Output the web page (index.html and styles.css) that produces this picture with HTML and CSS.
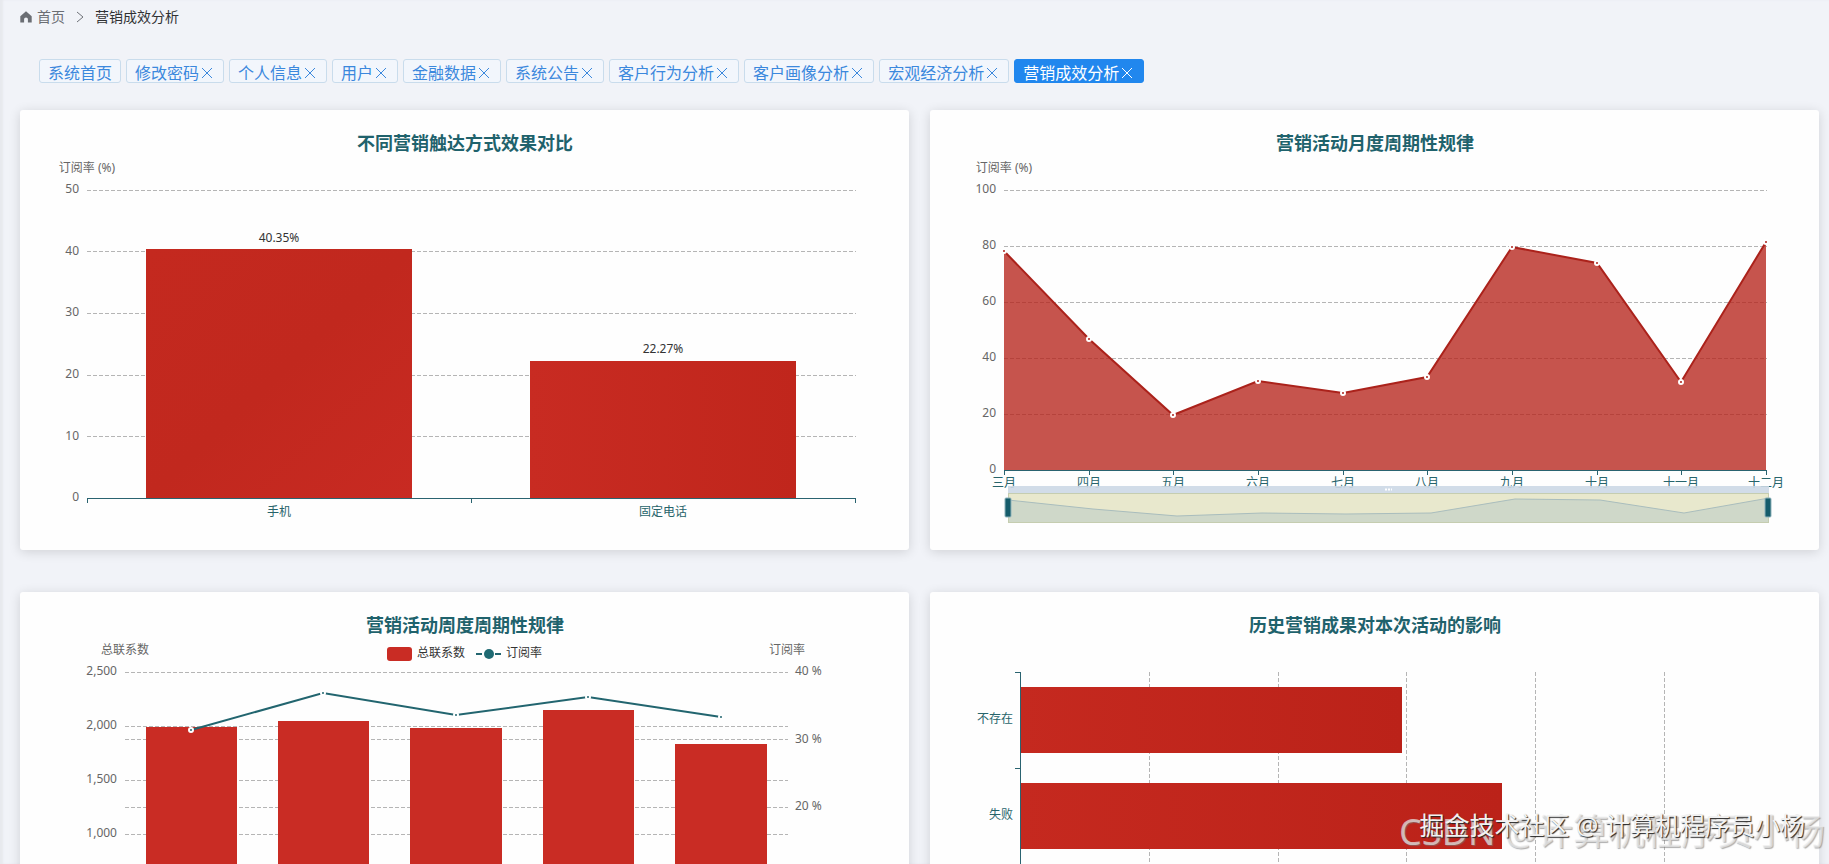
FILE: index.html
```html
<!DOCTYPE html>
<html lang="zh-CN">
<head>
    <meta charset="UTF-8">
    <meta name="viewport" content="width=device-width, initial-scale=1.0">
    <title>营销成效分析</title>
    <link rel="stylesheet" href="styles.css">
</head>
<body>
    <div class="container">
        <nav class="breadcrumb">
            <svg class="home-icon" viewBox="0 0 12 12"><path d="M6 0.3 L11.7 5.2 V11.6 H7.9 V8 Q7.9 6.4 6 6.4 Q4.1 6.4 4.1 8 V11.6 H0.3 V5.2 Z"/></svg>
            <a href="#">首页</a>
            <svg class="arrow-icon" viewBox="0 0 8 12"><path d="M1 1 L7 6 L1 11"/></svg>
            <span class="current">营销成效分析</span>
        </nav>
        <div class="tabs">
            <div class="tab"><a href="#">系统首页</a></div>
            <div class="tab"><a href="#">修改密码</a><button aria-label="关闭"><svg viewBox="0 0 12 12"><path d="M1 1 L11 11 M11 1 L1 11"/></svg></button></div>
            <div class="tab"><a href="#">个人信息</a><button aria-label="关闭"><svg viewBox="0 0 12 12"><path d="M1 1 L11 11 M11 1 L1 11"/></svg></button></div>
            <div class="tab"><a href="#">用户</a><button aria-label="关闭"><svg viewBox="0 0 12 12"><path d="M1 1 L11 11 M11 1 L1 11"/></svg></button></div>
            <div class="tab"><a href="#">金融数据</a><button aria-label="关闭"><svg viewBox="0 0 12 12"><path d="M1 1 L11 11 M11 1 L1 11"/></svg></button></div>
            <div class="tab"><a href="#">系统公告</a><button aria-label="关闭"><svg viewBox="0 0 12 12"><path d="M1 1 L11 11 M11 1 L1 11"/></svg></button></div>
            <div class="tab"><a href="#">客户行为分析</a><button aria-label="关闭"><svg viewBox="0 0 12 12"><path d="M1 1 L11 11 M11 1 L1 11"/></svg></button></div>
            <div class="tab"><a href="#">客户画像分析</a><button aria-label="关闭"><svg viewBox="0 0 12 12"><path d="M1 1 L11 11 M11 1 L1 11"/></svg></button></div>
            <div class="tab"><a href="#">宏观经济分析</a><button aria-label="关闭"><svg viewBox="0 0 12 12"><path d="M1 1 L11 11 M11 1 L1 11"/></svg></button></div>
            <div class="tab active"><a href="#">营销成效分析</a><button aria-label="关闭"><svg viewBox="0 0 12 12"><path d="M1 1 L11 11 M11 1 L1 11"/></svg></button></div>
        </div>
        <div class="charts">
            <!-- 触达方式 -->
            <div class="card">
                <svg class="chart" viewBox="0 0 889 440">
                    <defs>
                        <linearGradient id="red1" x1="0" y1="0" x2="1" y2="1">
                            <stop offset="0" stop-color="#c4291f"/>
                            <stop offset="0.5" stop-color="#c1281e"/>
                            <stop offset="1" stop-color="#c82a22"/>
                        </linearGradient>
                        <linearGradient id="red2" x1="0" y1="0" x2="1" y2="0">
                            <stop offset="0" stop-color="#c82b22"/>
                            <stop offset="1" stop-color="#c0261c"/>
                        </linearGradient>
                    </defs>
                    <text class="title" x="445" y="40">不同营销触达方式效果对比</text>
                    <text class="name" x="67" y="62">订阅率 (%)</text>
                    <path class="grid" d="M67 80.5 H836 M67 141.5 H836 M67 203.5 H836 M67 265.5 H836 M67 326.5 H836"/>
                    <g class="y-label">
                        <text x="59" y="83">50</text>
                        <text x="59" y="145">40</text>
                        <text x="59" y="206">30</text>
                        <text x="59" y="268">20</text>
                        <text x="59" y="330">10</text>
                        <text x="59" y="391">0</text>
                    </g>
                    <rect x="126" y="139" width="266" height="249" fill="url(#red1)"/>
                    <rect x="510" y="251" width="266" height="137" fill="url(#red2)"/>
                    <path class="axis" d="M67 388.5 H836 M67.5 388 V393 M451.5 388 V393 M835.5 388 V393"/>
                    <text class="value" x="259" y="132">40.35%</text>
                    <text class="value" x="643" y="243">22.27%</text>
                    <text class="x-label" x="259" y="406">手机</text>
                    <text class="x-label" x="643" y="406">固定电话</text>
                </svg>
            </div>
            <!-- 月度规律 -->
            <div class="card">
                <svg class="chart" viewBox="0 0 889 440">
                    <text class="title" x="445" y="40">营销活动月度周期性规律</text>
                    <text class="name" x="74" y="62">订阅率 (%)</text>
                    <path class="grid" d="M74 80.5 H837 M74 136.5 H837 M74 192.5 H837 M74 248.5 H837 M74 304.5 H837"/>
                    <g class="y-label">
                        <text x="66" y="83">100</text>
                        <text x="66" y="139">80</text>
                        <text x="66" y="195">60</text>
                        <text x="66" y="251">40</text>
                        <text x="66" y="307">20</text>
                        <text x="66" y="363">0</text>
                    </g>
                    <path class="area" d="M74 141 L159 229 L243 305 L328 271 L413 283 L497 267 L582 137 L667 153 L751 272 L836 132 V360 H74 Z"/>
                    <path class="line-red" d="M74 141 L159 229 L243 305 L328 271 L413 283 L497 267 L582 137 L667 153 L751 272 L836 132"/>
                    <g class="dot-red">
                        <circle cx="74" cy="141" r="2"/>
                        <circle cx="159" cy="229" r="2"/>
                        <circle cx="243" cy="305" r="2"/>
                        <circle cx="328" cy="271" r="2"/>
                        <circle cx="413" cy="283" r="2"/>
                        <circle cx="497" cy="267" r="2"/>
                        <circle cx="582" cy="137" r="2"/>
                        <circle cx="667" cy="153" r="2"/>
                        <circle cx="751" cy="272" r="2"/>
                        <circle cx="836" cy="132" r="2"/>
                    </g>
                    <path class="axis" d="M74 360.5 H837 M74.5 360 V365 M159.5 360 V365 M243.5 360 V365 M328.5 360 V365 M413.5 360 V365 M497.5 360 V365 M582.5 360 V365 M667.5 360 V365 M751.5 360 V365 M836.5 360 V365"/>
                    <g class="x-label">
                        <text x="74" y="377">三月</text>
                        <text x="159" y="377">四月</text>
                        <text x="243" y="377">五月</text>
                        <text x="328" y="377">六月</text>
                        <text x="413" y="377">七月</text>
                        <text x="497" y="377">八月</text>
                        <text x="582" y="377">九月</text>
                        <text x="667" y="377">十月</text>
                        <text x="751" y="377">十一月</text>
                        <text x="836" y="377">十二月</text>
                    </g>
                    <!-- 区域缩放条 -->
                    <rect class="zoom-move" x="78" y="376" width="761" height="7"/>
                    <path class="zoom-grip" d="M455 379.5 H462"/>
                    <rect class="zoom-bg" x="78" y="383" width="761" height="30"/>
                    <path class="zoom-area" d="M78 390 L163 399 L247 406 L332 403 L416 404 L501 403 L585 389 L670 390 L754 403 L839 388 V413 H78 Z"/>
                    <path class="zoom-line" d="M78 390 L163 399 L247 406 L332 403 L416 404 L501 403 L585 389 L670 390 L754 403 L839 388"/>
                    <path class="zoom-border" d="M78.5 383 V413 M838.5 383 V413 M78 383.5 H839 M78 412.5 H839"/>
                    <rect class="zoom-handle" x="75" y="388" width="6" height="19" rx="1"/>
                    <rect class="zoom-handle" x="835" y="388" width="6" height="19" rx="1"/>
                </svg>
            </div>
            <!-- 周度规律 -->
            <div class="card">
                <svg class="chart" viewBox="0 0 889 440">
                    <text class="title" x="445" y="40">营销活动周度周期性规律</text>
                    <rect class="bar" x="367" y="55" width="25" height="14" rx="3"/>
                    <text class="legend" x="397" y="65">总联系数</text>
                    <path class="line-teal" d="M456 62 H462 M475 62 H481"/>
                    <circle class="legend-dot" cx="469" cy="62" r="5"/>
                    <text class="legend" x="486" y="65">订阅率</text>
                    <text class="name" x="105" y="62">总联系数</text>
                    <text class="name" x="767" y="62">订阅率</text>
                    <path class="grid" d="M105 80.5 H768 M105 134.5 H768 M105 147.5 H768 M105 188.5 H768 M105 215.5 H768 M105 242.5 H768"/>
                    <g class="y-label">
                        <text x="97" y="83">2,500</text>
                        <text x="97" y="137">2,000</text>
                        <text x="97" y="191">1,500</text>
                        <text x="97" y="245">1,000</text>
                    </g>
                    <g class="y-label-right">
                        <text x="775" y="83">40 %</text>
                        <text x="775" y="151">30 %</text>
                        <text x="775" y="218">20 %</text>
                    </g>
                    <g class="bar">
                        <rect x="126" y="135" width="91" height="215"/>
                        <rect x="258" y="129" width="91" height="221"/>
                        <rect x="390" y="136" width="92" height="214"/>
                        <rect x="523" y="118" width="91" height="232"/>
                        <rect x="655" y="152" width="92" height="198"/>
                    </g>
                    <path class="axis" d="M105 350.5 H768"/>
                    <path class="line-teal" d="M171 138 L303 101 L436 123 L568 105 L701 125"/>
                    <g class="dot-teal">
                        <circle cx="171" cy="138" r="2"/>
                        <circle cx="303" cy="101" r="2"/>
                        <circle cx="436" cy="123" r="2"/>
                        <circle cx="568" cy="105" r="2"/>
                        <circle cx="701" cy="125" r="2"/>
                    </g>
                </svg>
            </div>
            <!-- 历史成果 -->
            <div class="card">
                <svg class="chart" viewBox="0 0 889 440">
                    <defs>
                        <linearGradient id="red3" x1="0" y1="0" x2="1" y2="0">
                            <stop offset="0" stop-color="#c5291f"/>
                            <stop offset="1" stop-color="#bb2219"/>
                        </linearGradient>
                    </defs>
                    <text class="title" x="445" y="40">历史营销成果对本次活动的影响</text>
                    <path class="grid" d="M219.5 80 V368 M348.5 80 V368 M476.5 80 V368 M605.5 80 V368 M734.5 80 V368"/>
                    <rect x="90" y="95" width="382" height="66" fill="url(#red3)"/>
                    <rect x="90" y="191" width="482" height="66" fill="url(#red3)"/>
                    <path class="axis" d="M90.5 80 V368 M85 80.5 H91 M85 176.5 H91 M85 272.5 H91"/>
                    <g class="cat-label">
                        <text x="83" y="131">不存在</text>
                        <text x="83" y="227">失败</text>
                    </g>
                </svg>
            </div>
        </div>
    </div>
    <div class="watermark csdn">CSDN @计算机程序员小杨</div>
    <div class="watermark juejin">掘金技术社区 @ 计算机程序员小杨</div>
</body>
</html>
```

FILE: styles.css
```css
html, body {
    height: 100%;
    margin: 0;
    padding: 0;
    font-family: "Noto Sans", "Noto Sans CJK SC", sans-serif;
    background-color: #f1f3f8;
    color: #303133;
}
body {
    position: relative;
    overflow: hidden;
}
a {
    color: inherit;
    text-decoration: none;
}
.container {
    box-sizing: border-box;
    height: 100%;
    padding: 7px 10px 0 20px;
    overflow: hidden;
    box-shadow: inset 3px 0 2px #e7e9ee;
}
.breadcrumb {
    display: flex;
    align-items: center;
    height: 20px;
    font-size: 14px;
    line-height: 20px;
    color: #6b6e74;
}
.home-icon {
    width: 12px;
    height: 12px;
    margin-right: 5px;
    fill: #6b6e74;
}
.arrow-icon {
    width: 8px;
    height: 12px;
    margin: 0 11px;
    fill: none;
    stroke: #6f7278;
}
.breadcrumb .current {
    color: #303133;
}
.tabs {
    display: flex;
    gap: 5px;
    margin: 32px 0 27px 19px;
}
.tab {
    display: flex;
    align-items: center;
    box-sizing: border-box;
    height: 24px;
    padding: 4px 8px 0;
    border: 1px solid #c9dcec;
    border-radius: 3px;
    background-color: #f2f6fc;
    font-size: 16px;
    line-height: 20px;
    color: #3b88dd;
}
.tab button {
    display: flex;
    align-items: center;
    justify-content: flex-end;
    width: 16px;
    height: 16px;
    padding: 0 2px 0 0;
    border: none;
    background: none;
    color: inherit;
    cursor: pointer;
}
.tab svg {
    width: 12px;
    height: 12px;
    flex-shrink: 0;
    fill: none;
    stroke: currentColor;
}
.tab.active {
    border-color: #2187ee;
    background-color: #2187ee;
    color: #fff;
}
.charts {
    display: grid;
    grid-template-columns: 1fr 1fr;
    gap: 42px 21px;
}
.card {
    border-radius: 3px;
    background-color: #fefefe;
    box-shadow: 0 2px 12px rgba(0, 0, 0, 0.14);
}
.chart {
    display: block;
    width: 100%;
    font-size: 12px;
}
.title {
    font-size: 18px;
    font-weight: bold;
    text-anchor: middle;
    fill: #1f626c;
}
.name {
    text-anchor: middle;
    fill: #666;
}
.grid {
    fill: none;
    stroke: #b5b5b5;
    stroke-dasharray: 4 2;
}
.axis {
    fill: none;
    stroke: #2a6370;
}
.y-label {
    text-anchor: end;
    fill: #666;
}
.y-label-right {
    fill: #666;
}
.x-label {
    text-anchor: middle;
    fill: #27646b;
}
.cat-label {
    text-anchor: end;
    fill: #27646b;
}
.value {
    text-anchor: middle;
    fill: #333;
}
.legend {
    fill: #333;
}
.bar {
    fill: #c92c24;
}
.area {
    fill: #b52118;
    fill-opacity: 0.77;
}
.line-red {
    fill: none;
    stroke: #ab221b;
    stroke-width: 2;
}
.line-teal {
    fill: none;
    stroke: #22656f;
    stroke-width: 2;
}
.dot-red {
    fill: #ab221b;
    stroke: #fff;
    stroke-width: 2;
}
.dot-teal {
    fill: #22656f;
    stroke: #fff;
    stroke-width: 2;
}
.legend-dot {
    fill: #1f6a73;
}
.zoom-move {
    fill: #ccd8e6;
    fill-opacity: 0.9;
}
.zoom-grip {
    stroke: #fff;
    stroke-width: 2;
    stroke-dasharray: 2 1;
}
.zoom-bg {
    fill: #e8e8cd;
}
.zoom-area {
    fill: #cfd8c9;
}
.zoom-line {
    fill: none;
    stroke: #a9bdbd;
}
.zoom-border {
    stroke: #c5cdb0;
}
.zoom-handle {
    fill: #155c6b;
    stroke: #8fb3bb;
}
.watermark {
    position: absolute;
    white-space: nowrap;
    pointer-events: none;
}
.csdn {
    right: 4px;
    bottom: 12px;
    font-size: 36px;
    line-height: 40px;
    color: rgba(235, 235, 235, 0.7);
    text-shadow: 1px 1px 1px rgba(120, 120, 120, 0.6);
}
.juejin {
    right: 24px;
    bottom: 24px;
    font-size: 25px;
    line-height: 30px;
    color: #f2f2f2;
    text-shadow: 1px 1px 1px #222;
}
```
